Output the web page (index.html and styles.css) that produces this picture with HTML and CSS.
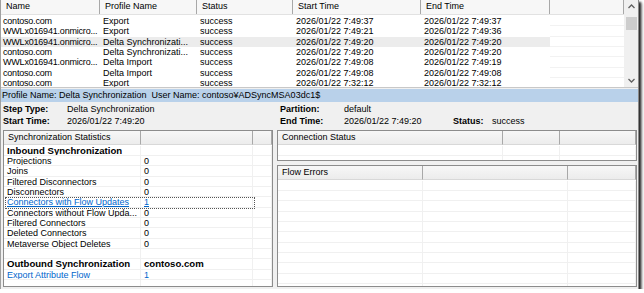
FILE: index.html
```html
<!DOCTYPE html>
<html>
<head>
<meta charset="utf-8">
<link rel="stylesheet" href="styles.css">
</head>
<body>
<div class="window">
  <div class="list">
    <div class="list-main">
      <div class="lrow lhead">
        <div class="hc">Name</div><div class="hc">Profile Name</div><div class="hc">Status</div><div class="hc">Start Time</div><div class="hc">End Time</div><div class="hc"></div>
      </div>
      <div class="lrow"><div>contoso.com</div><div>Export</div><div>success</div><div>2026/01/22 7:49:37</div><div>2026/01/22 7:49:37</div><div class="blank"></div></div>
      <div class="lrow"><div>WWLx016941.onmicro...</div><div>Export</div><div>success</div><div>2026/01/22 7:49:21</div><div>2026/01/22 7:49:36</div><div class="blank"></div></div>
      <div class="lrow sel"><div>WWLx016941.onmicro...</div><div>Delta Synchronizati...</div><div>success</div><div>2026/01/22 7:49:20</div><div>2026/01/22 7:49:20</div><div class="blank"></div></div>
      <div class="lrow"><div>contoso.com</div><div>Delta Synchronizati...</div><div>success</div><div>2026/01/22 7:49:20</div><div>2026/01/22 7:49:20</div><div class="blank"></div></div>
      <div class="lrow"><div>WWLx016941.onmicro...</div><div>Delta Import</div><div>success</div><div>2026/01/22 7:49:08</div><div>2026/01/22 7:49:19</div><div class="blank"></div></div>
      <div class="lrow"><div>contoso.com</div><div>Delta Import</div><div>success</div><div>2026/01/22 7:49:08</div><div>2026/01/22 7:49:08</div><div class="blank"></div></div>
      <div class="lrow"><div>contoso.com</div><div>Export</div><div>success</div><div>2026/01/22 7:32:12</div><div>2026/01/22 7:32:12</div><div class="blank"></div></div>
    </div>
    <div class="vscroll">
      <svg class="arrow" width="13" height="13" viewBox="0 0 13 13"><path d="M3.5 8 L6.5 5 L9.5 8" fill="none" stroke="#606060" stroke-width="1.3"/></svg>
      <div class="thumb"></div>
      <div class="track"></div>
      <svg class="arrow" width="13" height="13" viewBox="0 0 13 13"><path d="M3.5 5 L6.5 8 L9.5 5" fill="none" stroke="#606060" stroke-width="1.3"/></svg>
    </div>
  </div>
  <div class="profilebar">Profile Name: Delta Synchronization&nbsp; User Name: contoso¥ADSyncMSA03dc1$</div>
  <div class="info">
    <div class="lbl">Step Type:</div><div>Delta Synchronization</div><div class="lbl">Partition:</div><div>default</div><div></div><div></div>
    <div class="lbl">Start Time:</div><div>2026/01/22 7:49:20</div><div class="lbl">End Time:</div><div>2026/01/22 7:49:20</div><div class="lbl">Status:</div><div>success</div>
  </div>
  <div class="panels">
    <div class="box stats">
      <div class="grow ghead"><div class="hc">Synchronization Statistics</div><div class="hc"></div><div class="hc"></div></div>
      <div class="grow"><div class="b">Inbound Synchronization</div><div></div><div></div></div>
      <div class="grow"><div>Projections</div><div>0</div><div></div></div>
      <div class="grow"><div>Joins</div><div>0</div><div></div></div>
      <div class="grow"><div>Filtered Disconnectors</div><div>0</div><div></div></div>
      <div class="grow"><div>Disconnectors</div><div>0</div><div></div></div>
      <div class="grow focus"><div><span class="link">Connectors with Flow Updates</span></div><div><span class="link">1</span></div><div></div></div>
      <div class="grow"><div>Connectors without Flow Upda...</div><div>0</div><div></div></div>
      <div class="grow"><div>Filtered Connectors</div><div>0</div><div></div></div>
      <div class="grow"><div>Deleted Connectors</div><div>0</div><div></div></div>
      <div class="grow"><div>Metaverse Object Deletes</div><div>0</div><div></div></div>
      <div class="grow"><div></div><div></div><div></div></div>
      <div class="grow"><div class="b">Outbound Synchronization</div><div class="b">contoso.com</div><div></div></div>
      <div class="grow"><div><span class="link">Export Attribute Flow</span></div><div><span class="link">1</span></div><div></div></div>
      <div class="grow"><div></div><div></div><div></div></div>
    </div>
    <div class="right">
      <div class="box conn">
        <div class="grow ghead"><div class="hc">Connection Status</div><div class="hc"></div><div class="hc"></div></div>
        <div class="grow"><div></div><div></div><div></div></div>
        <div class="grow"><div></div><div></div><div></div></div>
      </div>
      <div class="box flow">
        <div class="grow ghead"><div class="hc">Flow Errors</div><div class="hc"></div><div class="hc"></div></div>
        <div class="grow"><div></div><div></div><div></div></div>
        <div class="grow"><div></div><div></div><div></div></div>
        <div class="grow"><div></div><div></div><div></div></div>
        <div class="grow"><div></div><div></div><div></div></div>
        <div class="grow"><div></div><div></div><div></div></div>
        <div class="grow"><div></div><div></div><div></div></div>
        <div class="grow"><div></div><div></div><div></div></div>
        <div class="grow"><div></div><div></div><div></div></div>
        <div class="grow"><div></div><div></div><div></div></div>
        <div class="grow"><div></div><div></div><div></div></div>
        <div class="grow"><div></div><div></div><div></div></div>
      </div>
    </div>
  </div>
</div>
</body>
</html>
```
FILE: styles.css
```css
* { box-sizing: border-box; }
html, body { margin: 0; padding: 0; background: #ffffff; }
body {
  font-family: "Liberation Sans", Arial, sans-serif;
  font-size: 9px;
  color: #000;
}
.window {
  width: 639px;
  height: 289px;
  background: #f0f0f0;
  border-left: 1px solid #a0a0a0;
  border-right: 1px solid #8a8a8a;
  box-shadow: 2px 2px 2px rgba(0,0,0,0.75), 3px 3px 3px rgba(0,0,0,0.35);
  overflow: hidden;
  display: flex;
  flex-direction: column;
}
.list {
  height: 88px;
  display: flex;
  background: #fff;
  border-bottom: 1px solid #c8c8c8;
  flex: none;
}
.list-main { width: 623px; overflow: hidden; }
.lrow {
  display: grid;
  grid-template-columns: 99px 97px 96px 128px 129px 74px;
  height: 10.35px;
  line-height: 10.35px;
  white-space: nowrap;
}
.lrow > div { padding-left: 3px; overflow: hidden; }
.lrow > div:first-child { letter-spacing: -0.2px; padding-left: 2px; }
.lrow.lhead > div:first-child { letter-spacing: 0; padding-left: 5px; }
.lrow.sel > div { background: #ececec; }
.lrow.sel > div.blank { background: #fff; }
.lrow > div.blank { border-bottom: 1px solid #f2f2f2; }
.lhead {
  height: 15px;
  line-height: 13px;
  background: #f7f7f7;
  border-bottom: 1px solid #e2e2e2;
  margin-bottom: 1px;
}
.lhead .hc { padding-left: 5px; border-right: 1px solid #a8a8a8; height: 14px; }
.vscroll {
  width: 14px;
  background: #f0f0f0;
  display: flex;
  flex-direction: column;
  align-items: center;
}
.arrow { flex: none; display: block; }
.thumb { width: 11px; height: 13px; background: #cdcdcd; margin-top: 4px; flex: none; }
.track { flex: 1; }
.profilebar {
  height: 13px;
  line-height: 12px;
  margin-top: 1px;
  background: #b9d1ea;
  padding-left: 1px;
  white-space: nowrap;
  flex: none;
}
.info {
  display: grid;
  grid-template-columns: 64px 213px 64px 109px 39px 1fr;
  grid-auto-rows: 11.5px;
  line-height: 11.5px;
  padding: 2px 0 0 2px;
  height: 28px;
  flex: none;
  white-space: nowrap;
}
.info .lbl { font-weight: bold; }
.panels {
  display: flex;
  gap: 4px;
  padding-left: 2px;
  height: 157px;
  flex: none;
}
.box {
  background: #fff;
  border: 1px solid #8c8c8c;
  overflow: hidden;
}
.stats { width: 270px; }
.right { width: 360px; display: flex; flex-direction: column; gap: 4px; }
.conn { height: 31px; flex: none; }
.flow { flex: 1; }
.grow {
  display: grid;
  height: 10.35px;
  line-height: 10.35px;
  white-space: nowrap;
}
.stats .grow { grid-template-columns: 137px 112px 1fr; }
.conn .grow { grid-template-columns: 225px 57px 1fr; }
.flow .grow { grid-template-columns: 145px 145px 1fr; }
.grow > div {
  padding-left: 3px;
  border-right: 1px solid #f0f0f0;
  border-bottom: 1px solid #f0f0f0;
  overflow: hidden;
}
.ghead { height: 14px; line-height: 13px; margin-bottom: 0.5px; }
.ghead > div.hc {
  border-right: 1px solid #a8a8a8;
  border-bottom: 1px solid #d8d8d8;
  padding-left: 4px;
  background: linear-gradient(#f7f7f7, #ececec);
}
.b { font-weight: bold; font-size: 9.6px; }
.link { color: #0066cc; text-decoration: underline; }
.focus { position: relative; }
.focus::after {
  content: "";
  position: absolute;
  left: 1px; top: 0; width: 248px; height: 10px;
  border: 1px dotted #555;
}
```
